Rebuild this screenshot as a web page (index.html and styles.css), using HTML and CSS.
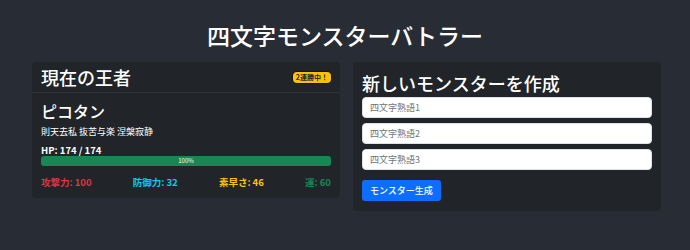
FILE: index.html
```html
<!DOCTYPE html>
<html lang="ja">
<head>
  <meta charset="UTF-8" />
  <title>四文字モンスターバトラー</title>
  <link rel="stylesheet" href="styles.css">
</head>
<body>
  <h1 class="title">四文字モンスターバトラー</h1>
  <div class="board">
    <div class="card">
      <div class="card-header">
        <h4>現在の王者</h4>
        <span class="badge">2連勝中！</span>
      </div>
      <div class="card-body">
        <h5 class="monster-name">ピコタン</h5>
        <p class="words">則天去私 抜苦与楽 涅槃寂静</p>
        <div class="hp">HP: 174 / 174</div>
        <div class="progress">
          <div class="progress-bar" style="width:100%">100%</div>
        </div>
        <div class="stats">
          <span class="atk">攻撃力: 100</span>
          <span class="def">防御力: 32</span>
          <span class="spd">素早さ: 46</span>
          <span class="luck">運: 60</span>
        </div>
      </div>
    </div>

    <div class="card">
      <div class="card-body">
        <h4 class="create-title">新しいモンスターを作成</h4>
        <input type="text" class="word-input" placeholder="四文字熟語1" />
        <input type="text" class="word-input" placeholder="四文字熟語2" />
        <input type="text" class="word-input" placeholder="四文字熟語3" />
        <button class="button">モンスター生成</button>
      </div>
    </div>
  </div>
</body>
</html>
```

FILE: styles.css
```css
body {
  margin: 0;
  padding: 0;
  background-color: #282c34;
  color: #fff;
  font-family: "Noto Sans CJK JP", "Noto Sans", sans-serif;
}
.title {
  margin: 19px 0 11px;
  text-align: center;
  font-size: 23px;
  line-height: 32px;
  font-weight: 500;
}
.board {
  display: grid;
  grid-template-columns: 308px 308px;
  gap: 13px;
  align-items: start;
  padding: 0 29px 0 32px;
}
.card {
  background-color: #212529;
  border-radius: 4px;
}
.card-header {
  display: flex;
  justify-content: space-between;
  align-items: center;
  padding: 5px 9px;
  border-bottom: 1px solid rgba(255, 255, 255, 0.06);
}
.card-header h4 {
  margin: 0;
  font-size: 18px;
  line-height: 20px;
  font-weight: 500;
}
.badge {
  background-color: #ffc107;
  color: #212529;
  font-size: 7px;
  font-weight: bold;
  line-height: 8px;
  padding: 1.5px 3px;
  border-radius: 4px;
  box-shadow: 0 0 0 1px rgba(0, 0, 0, 0.4);
}
.card-body {
  padding: 9px 9px 10px;
}
.monster-name {
  margin: 0 0 5px;
  font-size: 16px;
  line-height: 18px;
  font-weight: 500;
}
.words {
  margin: 0 0 6px;
  font-size: 9px;
  line-height: 13px;
}
.hp {
  font-size: 9.5px;
  line-height: 12px;
  font-weight: bold;
}
.progress {
  height: 10px;
  background-color: #343a40;
  border-radius: 3px;
  overflow: hidden;
}
.progress-bar {
  height: 100%;
  background-color: #198754;
  color: #fff;
  font-size: 6px;
  line-height: 10px;
  text-align: center;
}
.stats {
  display: flex;
  justify-content: space-between;
  margin-top: 10px;
  font-size: 9.5px;
  line-height: 12px;
  font-weight: bold;
}
.atk { color: #dc3545; }
.def { color: #0dcaf0; }
.spd { color: #ffc107; }
.luck { color: #198754; }

.create-title {
  margin: 0 0 2px;
  font-size: 18px;
  line-height: 24px;
  font-weight: 500;
}
.word-input {
  display: block;
  width: 100%;
  height: 21px;
  margin-bottom: 5px;
  padding: 0 7px;
  font-family: inherit;
  font-size: 9px;
  border: 1px solid #dee2e6;
  border-radius: 4px;
  box-sizing: border-box;
  background-color: #fff;
}
.word-input::placeholder {
  color: #6c757d;
}
.button {
  margin-top: 4px;
  height: 21px;
  padding: 0 8px;
  font-family: inherit;
  font-size: 9px;
  font-weight: 500;
  color: #fff;
  background-color: #0d6efd;
  border: none;
  border-radius: 3px;
  cursor: pointer;
}
```
